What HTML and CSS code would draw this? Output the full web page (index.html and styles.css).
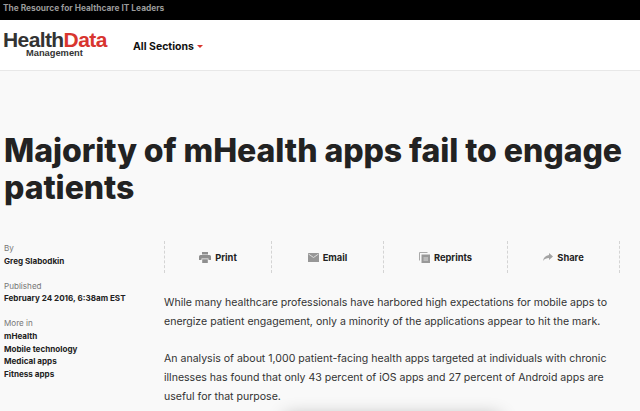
FILE: index.html
```html
<!DOCTYPE html>
<html lang="en">

<head>
  <meta charset="UTF-8">
  <title>Majority of mHealth apps fail to engage patients</title>
  <link rel="stylesheet" href="styles.css">
</head>

<body>

  <div class="top-bar">The Resource for Healthcare IT Leaders</div>

  <header class="site-header">
    <a class="logo" href="#">
      <span class="logo-main">Health<span class="logo-red">Data</span></span>
      <span class="logo-sub">Management</span>
    </a>
    <a class="sections" href="#">All Sections <span class="caret"></span></a>
  </header>

  <main class="article">
    <h1>Majority of mHealth apps fail to engage patients</h1>

    <div class="article-body">
      <!-- Byline column -->
      <aside class="meta">
        <div class="meta-group">
          <span class="meta-label">By</span>
          <a href="#">Greg Slabodkin</a>
        </div>
        <div class="meta-group">
          <span class="meta-label">Published</span>
          <a href="#">February 24 2016, 6:38am EST</a>
        </div>
        <div class="meta-group">
          <span class="meta-label">More in</span>
          <a href="#">mHealth</a>
          <a href="#">Mobile technology</a>
          <a href="#">Medical apps</a>
          <a href="#">Fitness apps</a>
        </div>
      </aside>

      <div class="content">
        <div class="actions">
          <a class="action" href="#">
            <svg width="12" height="11" viewBox="0 0 12 11"><path fill="#8f8f8f" d="M3 0h6v2.500H3zM1.500 3h9A1.500 1.500 0 0 1 12 4.500V8H9.500V6.500h-7V8H0V4.500A1.500 1.500 0 0 1 1.500 3zM3.200 7.200h5.600V11H3.200z"/></svg>
            Print
          </a>
          <a class="action" href="#">
            <svg width="11" height="9" viewBox="0 0 11 9"><path fill="#979797" d="M0 0h11v9H0z"/><path fill="none" stroke="#e4e4e4" stroke-width="0.900" d="M0.500 1l5 3.500 5-3.500"/></svg>
            Email
          </a>
          <a class="action" href="#">
            <svg width="11" height="11" viewBox="0 0 11 11"><path fill="none" stroke="#aaa" d="M0.500 8.500V0.500h8"/><path fill="#999" d="M2.500 2.500H11V11H2.500z"/><path fill="none" stroke="#eee" stroke-width="0.800" d="M4.500 6h4.500M4.500 8h4.500"/></svg>
            Reprints
          </a>
          <a class="action" href="#">
            <svg width="10" height="8" viewBox="0 0 10 8"><path fill="#a3a3a3" d="M6 0l4 3.500L6 7V5C3.500 5 1.500 5.800 0 8c.4-3.200 2.500-5.500 6-6z"/></svg>
            Share
          </a>
        </div>

        <p>While many healthcare professionals have harbored high expectations for mobile apps to energize patient engagement, only a minority of the applications appear to hit the mark.</p>
        <p>An analysis of about 1,000 patient-facing health apps targeted at individuals with chronic illnesses has found that only 43 percent of iOS apps and 27 percent of Android apps are useful for that purpose.</p>
      </div>
    </div>
  </main>

  <div class="bottom-shadow"></div>

</body>

</html>
```

FILE: styles.css
```css
/* Global Styles */
html,
body {
  margin: 0;
  padding: 0;
  height: 411px;
  overflow: hidden;
  background-color: #f9f9f9;
  color: #222;
  font-family: 'Inter', sans-serif;
}

a {
  color: inherit;
  text-decoration: none;
}

/* Top Bar */
.top-bar {
  height: 20px;
  padding-left: 3px;
  background-color: #000;
  color: #9a9a9a;
  font-size: 8.35px;
  font-weight: 700;
  line-height: 17px;
}

/* Header */
.site-header {
  height: 50px;
  display: flex;
  align-items: center;
  background-color: #fff;
  border-bottom: 1px solid #e8e8e8;
}

.logo {
  width: 133px;
  margin-bottom: 3px;
  padding-left: 3px;
  box-sizing: border-box;
  display: flex;
  flex-direction: column;
  font-family: 'Liberation Sans', sans-serif;
  font-weight: 700;
}

.logo-main {
  font-size: 21px;
  line-height: 17px;
  letter-spacing: -0.6px;
  color: #333;
}

.logo-red {
  color: #d8352f;
}

.logo-sub {
  margin-top: 1px;
  margin-left: 23px;
  font-size: 9.3px;
  line-height: 8px;
  color: #333;
}

.sections {
  margin-top: 3px;
  font-size: 10.5px;
  font-weight: 700;
  color: #111;
}

.caret {
  display: inline-block;
  margin-left: 1px;
  vertical-align: 2px;
  border-left: 3px solid transparent;
  border-right: 3px solid transparent;
  border-top: 3px solid #d8352f;
}

/* Article */
.article {
  padding: 61px 4px 0;
}

h1 {
  margin: 0 0 35px;
  font-size: 32px;
  line-height: 37px;
  font-weight: 800;
  letter-spacing: -0.05px;
  color: #222;
}

.article-body {
  display: flex;
}

.meta {
  width: 160px;
  flex-shrink: 0;
  padding-top: 1px;
  font-size: 8.1px;
  line-height: 12.6px;
}

.meta-group {
  display: flex;
  flex-direction: column;
  margin-bottom: 12.500px;
}

.meta-group a {
  font-weight: 700;
}

.meta-label {
  color: #777;
}

.content {
  width: 446px;
}

/* Action Buttons */
.actions {
  display: grid;
  grid-template-columns: 107px 112px 124px 112px;
  height: 32px;
  margin-bottom: 20px;
  border-left: 1px dashed #d4d4d4;
  width: fit-content;
}

.action {
  display: flex;
  align-items: center;
  justify-content: center;
  gap: 4px;
  border-right: 1px dashed #d4d4d4;
  font-size: 9.3px;
  font-weight: 700;
}

.content p {
  margin: 0 0 18px;
  font-size: 10.55px;
  line-height: 19px;
  color: #333;
}

/* Shadow of the panel just below the window */
.bottom-shadow {
  position: absolute;
  left: 285px;
  top: 416px;
  width: 215px;
  height: 20px;
  box-shadow: 0 0 18px rgba(0, 0, 0, 0.3);
}
```
